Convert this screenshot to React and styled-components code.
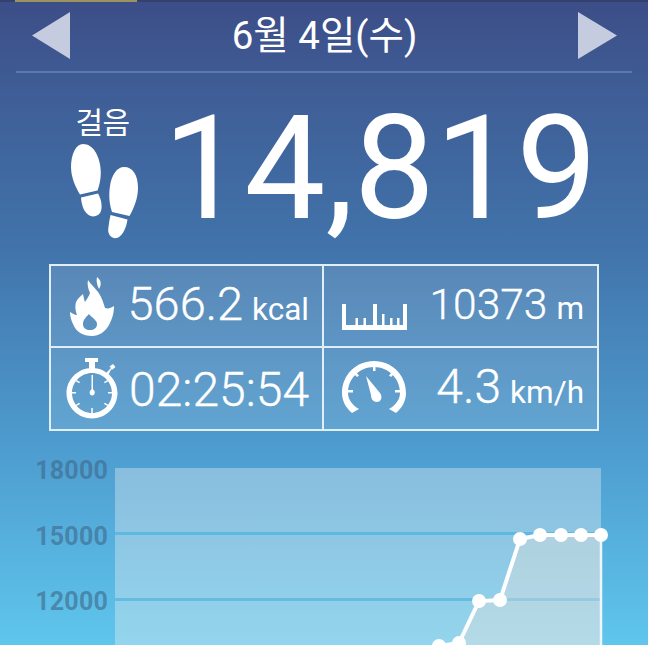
import React from "react";
import styled, { createGlobalStyle } from "styled-components";

const Global = createGlobalStyle`
  html, body { margin: 0; padding: 0; background: #5fc6ec; }
  * { box-sizing: border-box; }
`;
const Page = styled.div`
  width: 648px; height: 645px; overflow: hidden; position: relative;
  background: linear-gradient(180deg, #3c4d87 0%, #3f5b94 12%, #4173aa 38%, #4e9dd0 70%, #5fc6ec 100%);
  font-family: Roboto, "Noto Sans CJK KR", sans-serif; color: #fff;
`;
const StatusStrip = styled.div`
  height: 2px; padding-left: 15px; background: #35406e;
`;
const StatusBar = styled.div`
  width: 122px; height: 2px; background: #9c9361;
`;
const Header = styled.header`
  height: 71px; margin: 0 16px; padding: 9px 15px 10px 16px;
  display: flex; align-items: center; justify-content: space-between;
  border-bottom: 2px solid #5c7bac;
`;
const Arrow = styled.svg`width: 39px; height: 50px; display: block; fill: #c5cce0;`;
const DateText = styled.div`font-size: 38.5px; line-height: 50px; margin-left: 0;`;
const StepRow = styled.section`
  height: 191px; padding: 0 0 0 70px; display: flex; align-items: flex-start;
`;
const StepLabelCol = styled.div`
  width: 71px; margin-top: 33px; display: flex; flex-direction: column; align-items: center;
`;
const StepLabel = styled.div`font-size: 30px; line-height: 34px; margin-left: -6px; letter-spacing: -0.5px;`;
const Feet = styled.svg`width: 71px; height: 97px; display: block; margin-top: 4px; fill: #fff;`;
const StepCount = styled.div`
  margin: 8px 0 0 22px; font-size: 144.5px; line-height: 176px; font-weight: 400;
`;
const Stats = styled.section`
  width: 550px; height: 167px; margin-left: 49px; display: grid;
  grid-template-columns: 273px 273px; grid-template-rows: 82px 81px;
  border: 2px solid #e2eef6; background: rgba(255,255,255,.12);
`;
const Cell = styled.div`
  display: flex; align-items: center; padding: ${p => p.$pad};
  justify-content: space-between;
  border-right: ${p => (p.$right ? "2px solid #e2eef6" : "0")};
  border-bottom: ${p => (p.$bottom ? "2px solid #e2eef6" : "0")};
`;
const Icon = styled.svg`
  display: block; flex: none; fill: #fff;
  width: ${p => p.$w}px; height: ${p => p.$h}px; margin-top: ${p => p.$mt || 0}px;
`;
const Value = styled.div`
  font-size: ${p => p.$size}px; line-height: 50px; font-weight: 300; white-space: nowrap;
  display: flex; align-items: baseline; margin-top: 2px;
  -webkit-text-stroke: .35px #fff;
`;
const Unit = styled.span`font-size: 31.5px; font-weight: 400; margin-left: 9px; -webkit-text-stroke: 0;`;
const Chart = styled.section`
  margin-top: 27px; display: flex; align-items: flex-start; height: 190px;
`;
const Axis = styled.div`
  width: 108px; display: flex; flex-direction: column; align-items: flex-end; gap: 39.500px;
`;
const AxisLabel = styled.div`
  font-size: 25px; line-height: 26px; font-weight: 700; color: rgba(62,102,136,.62); letter-spacing: 0.2px;
`;
const Plot = styled.svg`display: block; width: 508px; height: 190px; margin: 0 0 0 7px; flex: none; overflow: visible;`;

const pts = [[324,188],[344,185],[364,143],[385,142],[405,81],[425,77],[446,77],[466,77],[486,77]];
const line = pts.map(p => p.join(",")).join(" ");

export default function App() {
  return (
    <Page>
      <Global />
      <StatusStrip><StatusBar /></StatusStrip>
      <Header>
        <Arrow viewBox="0 0 39 50"><polygon points="0,24.5 38,1 38,48" /></Arrow>
        <DateText>6월 4일(수)</DateText>
        <Arrow viewBox="0 0 39 50"><polygon points="39,24.5 0,1 0,48" /></Arrow>
      </Header>
      <StepRow>
        <StepLabelCol>
          <StepLabel>걸음</StepLabel>
          <Feet viewBox="0 0 71 97">
            <path d="M13 0C23 0 29 11 30.5 24C31.5 33 29.5 41 27.5 46.5L10 50.5C6 44 1 34 1 23C1 10 6 0 13 0Z" />
            <path d="M11 53.5L28 49.500C31 55 32.5 61 31 67C29.5 71 25 73.5 20.5 72C14 69.5 11.5 61 11 53.5Z" />
            <path d="M54 23C63 23 68 31 68 44C68 54 64 64 59.5 72L42 68C39.5 60 38.5 52 40 42C41.5 31 47 23 54 23Z" />
            <path d="M40.5 71L57.5 75.5C56.5 83 53 92 47 94C41 95 37 90 38.5 83C39 79 39.5 75 40.5 71Z" />
          </Feet>
        </StepLabelCol>
        <StepCount>14,819</StepCount>
      </StepRow>
      <Stats>
        <Cell $right $bottom $pad="0 13px 0 19px">
          <Icon $w={45} $h={61} viewBox="0 0 45 61">
            <path fillRule="evenodd" d="M27 1C31 4 32 8 29 13C27 9 26 5 27 1ZM18 4C22 10 28 14 31 21C33 25 34 29 35 32C38 33 41 32 44 30C44 38 42 43 39 49C35 56 29 60 22 60C13 60 6 56 3 48C1 44 0 40 0 36C3 38 5 39 7 39C5 34 5 30 6 26C8 22 11 20 13 18C14 22 14 24 15 26C17 23 19 20 20 17C18 13 17 8 18 4ZM19 38C16 41 13 44 13 48C13 52 16 54 20 54C24 54 27 52 27 48C27 44 22 42 19 38Z"/>
          </Icon>
          <Value $size={47}>566.2<Unit>kcal</Unit></Value>
        </Cell>
        <Cell $bottom $pad="0 13px 0 18px">
          <Icon $w={65} $h={26} $mt={22} viewBox="0 0 65 26">
            <path d="M0 0H4V21H61V0H65V26H0Z"/>
            <path d="M13.500 14h2.500v9h-2.500zM21.500 14h2.500v9h-2.500zM31 0h4v23h-4zM40 10h2.500v13H40zM48 14h2.500v9H48zM55 14h2.500v9H55z"/>
          </Icon>
          <Value $size={42.5}>10373<Unit>m</Unit></Value>
        </Cell>
        <Cell $right $pad="0 13px 0 15px">
          <Icon $w={52} $h={61} viewBox="0 0 52 61">
            <path fillRule="evenodd" d="M19 0H32V4H29V10.300C41 11.500 51.500 22 51.500 35C51.500 49 40 60.500 26 60.500C12 60.500 .5 49 .5 35C.5 22 11 11.500 23 10.300V4H19ZM26 15C15 15 6 24 6 35C6 46 15 55 26 55C37 55 46 46 46 35C46 24 37 15 26 15Z"/>
            <path d="M40 15L45 10L43.500 8.500L47 6L49.500 9L46.500 11.500L45 11.500L42 18Z"/>
            <path d="M25.500 17h1.500v14.500c2.500 1 2.500 6-.8 6c-3.200 0-3.200-5-.7-6ZM25.300 50h1.500v5h-1.500zM6 34h4v1.500H6zM42 34h4v1.500h-4zM10.500 22l3.500 2-.8 1.300-3.500-2zM41.500 22l-3.500 2 .8 1.300 3.500-2zM10.500 48l3.500-2-.8-1.300-3.500 2zM41.500 48l-3.500-2 .8-1.300 3.500 2z"/>
          </Icon>
          <Value $size={48}>02:25:54</Value>
        </Cell>
        <Cell $pad="0 13px 0 18px">
          <Icon $w={64} $h={52} $mt={-4} viewBox="0 0 64 52">
            <path d="M10 52C3 46 0 39 0 32C0 14 14 0 32 0C50 0 64 14 64 32C64 39 61 46 54 52L47 48C54 44 58 38 58 32C58 17 46 6 32 6C18 6 6 17 6 32C6 38 10 44 17 48Z"/>
            <path d="M31 4h2.500v6H31zM11 12l2-2 4 4.500-2 1.500zM53 12l-2-2-4 4.500 2 1.500zM5 29h6v2.500H5zM53 29h6v2.500h-6zM24 15L38 32C41 36 39 41 35 41C31 41 29 38 29 34Z"/>
          </Icon>
          <Value $size={48}>4.3<Unit>km/h</Unit></Value>
        </Cell>
      </Stats>
      <Chart>
        <Axis>
          <AxisLabel>18000</AxisLabel>
          <AxisLabel>15000</AxisLabel>
          <AxisLabel>12000</AxisLabel>
        </Axis>
        <Plot viewBox="0 0 508 190">
          <rect x="0" y="10" width="486" height="190" fill="#f0f2f2" fillOpacity=".36" />
          <rect x="0" y="74" width="486" height="3" fill="#5db9e2" />
          <rect x="0" y="140" width="486" height="3" fill="#5db9e2" fillOpacity=".85" />
          <polygon points={`${line} 486,198 324,198`} fill="#ece2dc" fillOpacity=".36" />
          <polyline points={line} fill="none" stroke="#fff" strokeWidth="4" />
          <line x1="486" y1="77" x2="486" y2="198" stroke="#eef6fa" strokeWidth="2.500" />
          {pts.map(([x, y]) => <circle key={x} cx={x} cy={y} r="7" fill="#fff" />)}
        </Plot>
      </Chart>
    </Page>
  );
}
